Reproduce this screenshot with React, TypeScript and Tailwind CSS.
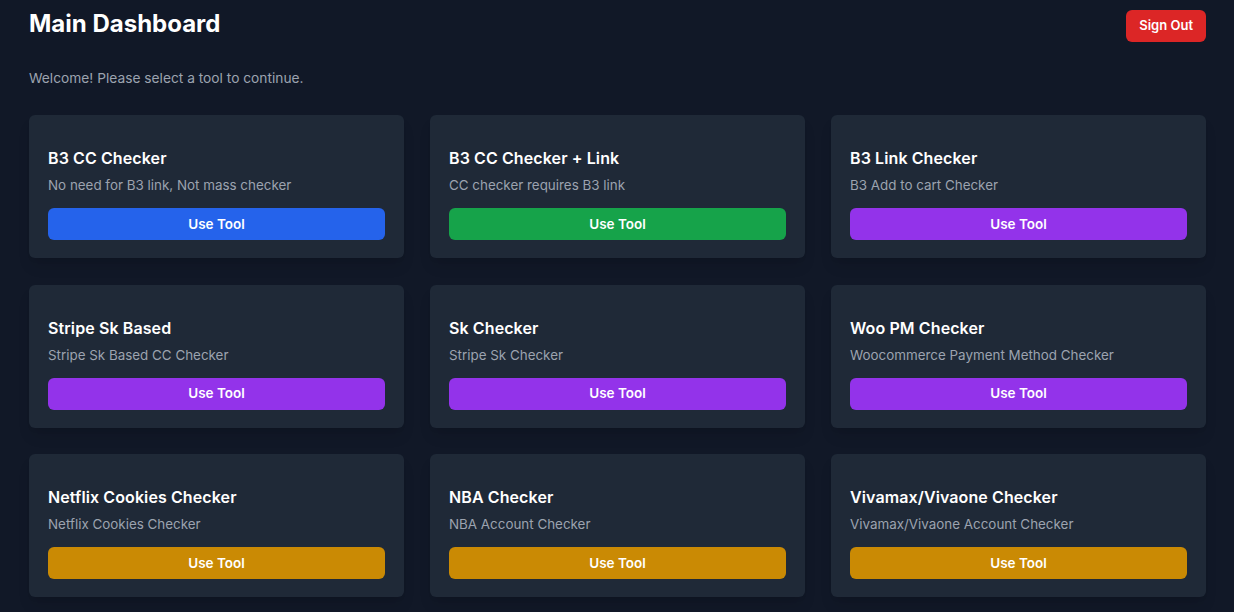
import React from "react";

type Tool = { title: string; desc: string; color: string };

const tools: Tool[] = [
  { title: "B3 CC Checker", desc: "No need for B3 link, Not mass checker", color: "bg-[#2563eb]" },
  { title: "B3 CC Checker + Link", desc: "CC checker requires B3 link", color: "bg-[#16a34a]" },
  { title: "B3 Link Checker", desc: "B3 Add to cart Checker", color: "bg-[#9333ea]" },
  { title: "Stripe Sk Based", desc: "Stripe Sk Based CC Checker", color: "bg-[#9333ea]" },
  { title: "Sk Checker", desc: "Stripe Sk Checker", color: "bg-[#9333ea]" },
  { title: "Woo PM Checker", desc: "Woocommerce Payment Method Checker", color: "bg-[#9333ea]" },
  { title: "Netflix Cookies Checker", desc: "Netflix Cookies Checker", color: "bg-[#ca8a04]" },
  { title: "NBA Checker", desc: "NBA Account Checker", color: "bg-[#ca8a04]" },
  { title: "Vivamax/Vivaone Checker", desc: "Vivamax/Vivaone Account Checker", color: "bg-[#ca8a04]" },
];

export default function App() {
  return (
    <div
      className="min-h-[612px] bg-[#111827] px-7 pt-2 pb-4 text-white"
      style={{ fontFamily: "Inter, 'Noto Sans', sans-serif" }}
    >
      <div className="flex items-start justify-between">
        <h1 className="ml-[1px] text-2xl leading-8 font-bold text-white">Main Dashboard</h1>
        <button className="mt-[2px] h-8 rounded-md bg-[#dc2626] px-[13px] text-[13px] font-semibold text-white">
          Sign Out
        </button>
      </div>
      <p className="mt-[26px] ml-[1px] text-[13.75px] leading-5 text-[#9ca3af]">
        Welcome! Please select a tool to continue.
      </p>
      <div className="mt-[27px] ml-[1px] grid grid-cols-3 gap-x-[26px] gap-y-[26.5px]">
        {tools.map((t) => (
          <div
            key={t.title}
            className="rounded-md bg-[#1f2937] px-[19px] pt-[31px] pb-[18px] shadow-lg"
          >
            <h2 className="text-base leading-6 font-semibold tracking-[0.1px] text-white">{t.title}</h2>
            <p className="mt-[5px] text-[13.4px] leading-5 text-[#9ca3af]">{t.desc}</p>
            <button
              className={`mt-[13px] h-8 w-full rounded-md text-[13.5px] font-semibold text-white ${t.color}`}
            >
              Use Tool
            </button>
          </div>
        ))}
      </div>
    </div>
  );
}
